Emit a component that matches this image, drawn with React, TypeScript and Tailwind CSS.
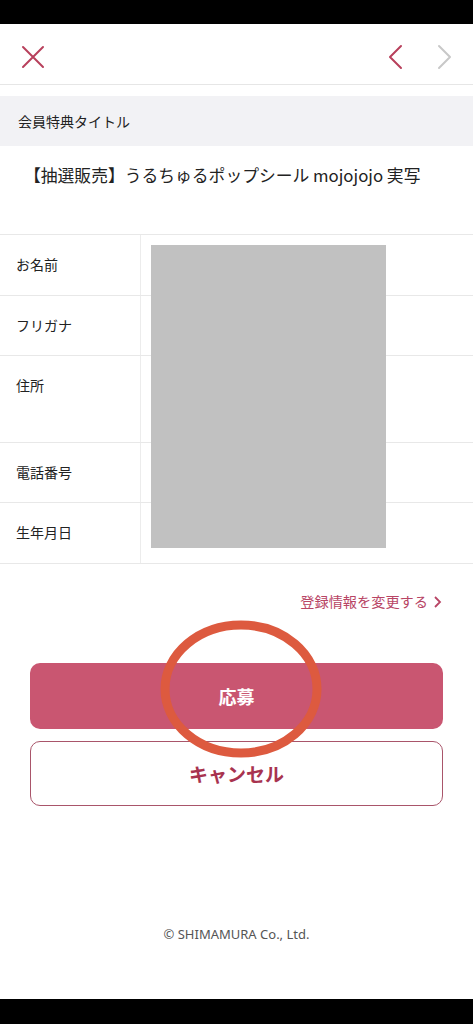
import React from "react";

const font = { fontFamily: '"Noto Sans CJK JP", "Noto Sans", sans-serif' };

const rows: { label: string; h: string }[] = [
  { label: "お名前", h: "h-[61px]" },
  { label: "フリガナ", h: "h-[60px]" },
  { label: "住所", h: "h-[87px]" },
  { label: "電話番号", h: "h-[60px]" },
  { label: "生年月日", h: "h-[61px]" },
];

export default function App() {
  return (
    <div className="w-[473px] h-[1024px] bg-white flex flex-col relative overflow-hidden" style={font}>
      <div className="h-[24px] bg-black shrink-0" />
      {/* header */}
      <div className="h-[61px] flex items-center justify-between px-[20px] pt-[6px] border-b border-[#e6e6e6] shrink-0">
        <svg width="26" height="26" viewBox="0 0 26 26">
          <path d="M3 3 L23 23 M23 3 L3 23" stroke="#b8405c" strokeWidth="2" strokeLinecap="round" />
        </svg>
        <div className="flex items-center gap-[34px]">
          <svg width="16" height="26" viewBox="0 0 16 26">
            <path d="M14 2 L3 13 L14 24" stroke="#b8405c" strokeWidth="2" fill="none" strokeLinecap="round" strokeLinejoin="round" />
          </svg>
          <svg width="16" height="26" viewBox="0 0 16 26">
            <path d="M2 2 L13 13 L2 24" stroke="#c8c8c8" strokeWidth="2" fill="none" strokeLinecap="round" strokeLinejoin="round" />
          </svg>
        </div>
      </div>
      <div className="h-[11px] shrink-0" />
      <div className="h-[50px] bg-[#f2f2f5] flex items-center px-[18px] text-[14px] font-normal text-[#222]">
        会員特典タイトル
      </div>
      <div className="h-[60px] flex items-center pl-[24px] text-[16.8px] text-[#222]">
        【抽選販売】うるちゅるポップシール mojojojo 実写
      </div>
      <div className="h-[28px]" />
      {/* table */}
      <div className="relative border-t border-[#e8e8e8]">
        {rows.map((r) => (
          <div key={r.label} className={`${r.h} flex border-b border-[#e8e8e8]`}>
            <div className="w-[141px] border-r border-[#ececec] pl-[16px] pt-[19px] text-[14px] text-[#222] font-normal">
              {r.label}
            </div>
            <div className="flex-1" />
          </div>
        ))}
        <div className="absolute left-[151px] top-[10px] w-[235px] h-[303px] bg-[#c1c1c1]" />
      </div>
      <div className="flex justify-end items-center pr-[30px] pt-[27px] text-[14.2px] text-[#b84565]">
        <span>登録情報を変更する</span>
        <svg width="10" height="14" viewBox="0 0 10 14" className="ml-[5px]">
          <path d="M2 2 L7 7 L2 12" stroke="#b84565" strokeWidth="1.8" fill="none" />
        </svg>
      </div>
      <div className="px-[30px] pt-[51px] flex flex-col gap-[12px]">
        <button className="h-[66px] rounded-[10px] bg-[#c95671] text-white text-[18px] font-bold">応募</button>
        <button className="h-[65px] rounded-[10px] border-[1.5px] border-[#a9556a] bg-white text-[#a8334f] text-[19px] font-bold">
          キャンセル
        </button>
      </div>
      <div className="flex-1 flex items-end justify-center pb-[55px] text-[13px] text-[#555]" style={{ fontFamily: '"Noto Sans", sans-serif' }}>
        © SHIMAMURA Co., Ltd.
      </div>
      <div className="h-[25px] bg-black shrink-0" />
      {/* annotation circle */}
      <svg className="absolute left-[158px] top-[618px]" width="168" height="144" viewBox="0 0 168 144">
        <ellipse cx="83" cy="71" rx="76" ry="64" stroke="#dd5a3f" strokeWidth="9" fill="none" />
      </svg>
    </div>
  );
}
